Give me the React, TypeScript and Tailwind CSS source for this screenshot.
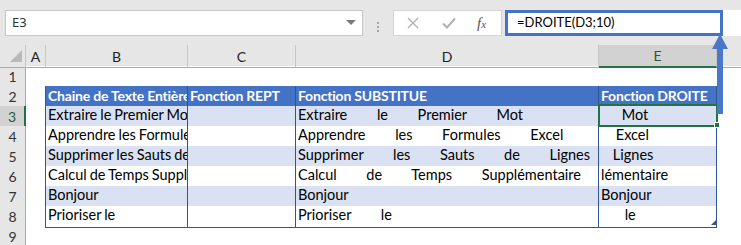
import React from "react";

const words = [
  "Extraire le Premier Mot",
  "Apprendre les Formules Excel",
  "Supprimer les Sauts de Lignes",
  "Calcul de Temps Supplémentaire",
  "Bonjour",
  "Prioriser le",
];

const right10 = (s: string) => s.slice(-10);

const GRID = "grid grid-cols-[26px_20px_142px_108px_303px_118px_1fr]";

function RowHeader({ n, active }: { n: number; active?: boolean }) {
  return (
    <div
      className={
        "flex items-center justify-center border-b border-[#d0d0d0] text-[14px] " +
        (active
          ? "bg-[#d2d2d2] border-r-2 border-r-[#217346] text-[#1e5c3a]"
          : "bg-[#e6e6e6] border-r border-r-[#ababab] text-[#333]")
      }
    >
      {n}
    </div>
  );
}

export default function App() {
  const data = words.map((b) => {
    const d = b.split(" ").join(" ".repeat(10));
    return { b, d, e: right10(d) };
  });

  return (
    <div className="relative w-[741px] h-[245px] overflow-hidden bg-white [font-family:Lato,'Liberation_Sans',sans-serif] text-[14.5px] text-black">
      {/* top formula bar */}
      <div className="flex h-[45px] bg-[#e6e6e6] pt-[10px]">
        <div className="ml-[5px] flex h-[26px] w-[358px] items-center justify-between border border-[#c6c6c6] bg-white pl-[6px] pr-[6px] [font-family:'Noto_Sans',sans-serif] text-[13px] text-[#333]">
          <span>E3</span>
          <svg width="10" height="6" viewBox="0 0 10 6">
            <polygon points="0,0 10,0 5,5" fill="#7a7a7a" />
          </svg>
        </div>
        <div className="flex w-[30px] flex-col items-center justify-center gap-[2px] pb-[2px]">
          <span className="h-[2px] w-[2px] bg-[#a6a6a6]" />
          <span className="h-[2px] w-[2px] bg-[#a6a6a6]" />
          <span className="h-[2px] w-[2px] bg-[#a6a6a6]" />
        </div>
        <div className="flex h-[26px] w-[109px] items-center border border-[#d4d4d4] bg-white">
          <svg className="ml-[13px]" width="12" height="12" viewBox="0 0 12 12">
            <path d="M1 1 L11 11 M11 1 L1 11" stroke="#b0b0b0" strokeWidth="1.3" />
          </svg>
          <svg className="ml-[23px]" width="14" height="12" viewBox="0 0 14 12">
            <path d="M1 6.5 L5 10.5 L13 1.5" stroke="#b0b0b0" strokeWidth="2" fill="none" />
          </svg>
          <span className="ml-[21px] italic text-[#555] [font-family:'Liberation_Serif',serif] text-[15px] leading-none">
            f<span className="text-[11px]">x</span>
          </span>
        </div>
        <div className="ml-[3px] flex h-[26px] w-[218px] items-center border-[3px] border-[#4472c4] bg-white pl-[9px] text-[13px] text-black">
          =DROITE(D3;10)
        </div>
        <div className="h-[26px] flex-1 bg-white" />
      </div>

      {/* column headers */}
      <div className={GRID + " h-[21px] bg-[#e6e6e6] text-[14px] text-[#222]"}>
        <div className="relative border-b border-r border-[#ababab] border-r-[#c6c6c6]">
          <svg className="absolute left-0 top-0" width="25" height="20" viewBox="0 0 25 20">
            <polygon points="10,17 22,5 22,17" fill="#b8b8b8" />
          </svg>
        </div>
        <div className="flex items-center justify-center border-b border-r border-[#ababab] border-r-[#c6c6c6]">A</div>
        <div className="flex items-center justify-center border-b border-r border-[#ababab] border-r-[#c6c6c6]">B</div>
        <div className="flex items-center justify-center border-b border-r border-[#ababab] border-r-[#c6c6c6]">C</div>
        <div className="flex items-center justify-center border-b border-r border-[#ababab] border-r-[#c6c6c6]">D</div>
        <div className="flex items-center justify-center border-b-2 border-r border-b-[#217346] border-r-[#c6c6c6] bg-[#d2d2d2] text-[#1e5c3a]">E</div>
        <div className="border-b border-[#ababab]" />
      </div>

      {/* row 1 */}
      <div className={GRID + " h-[20px]"}>
        <RowHeader n={1} />
        <div />
        <div className="border-b border-[#2f5597]" />
        <div className="border-b border-[#2f5597]" />
        <div className="border-b border-[#2f5597]" />
        <div className="border-b border-[#2f5597]" />
        <div />
      </div>

      {/* row 2 - table header */}
      <div className={GRID + " h-[20px]"}>
        <RowHeader n={2} />
        <div className="border-r border-[#2f5597]" />
        {["Chaine de Texte Entière", "Fonction REPT", "Fonction SUBSTITUE", "Fonction DROITE"].map((t) => (
          <div
            key={t}
            className="flex items-end overflow-hidden whitespace-pre border-b border-r border-[#2f5597] bg-[#4472c4] pb-[1px] pl-[2px] text-[14px] font-bold tracking-[-0.2px] text-white"
          >
            {t}
          </div>
        ))}
        <div />
      </div>

      {/* data rows */}
      {data.map((r, i) => {
        const shade = i % 2 === 0 ? "bg-[#d9e1f2]" : "bg-white";
        const cell =
          "flex items-end overflow-hidden whitespace-pre border-b border-r border-[#2f5597] pb-[1px] pl-[2px] [word-spacing:-0.75px] " +
          shade;
        return (
          <div key={i} className={GRID + " h-[20px]"}>
            <RowHeader n={i + 3} active={i === 0} />
            <div className="border-r border-[#2f5597]" />
            <div className={cell}>{r.b}</div>
            <div className={cell} />
            <div className={cell}>{r.d}</div>
            <div className={cell}>{r.e}</div>
            <div />
          </div>
        );
      })}

      {/* row 9 */}
      <div className={GRID + " h-[20px]"}>
        <RowHeader n={9} />
      </div>

      {/* table resize handle */}
      <svg className="absolute left-[711px] top-[220px]" width="5" height="5" viewBox="0 0 5 5">
        <polygon points="0,5 5,0 5,5" fill="#2f5597" />
      </svg>

      {/* selection E3 */}
      <div className="absolute left-[598px] top-[104px] h-[23px] w-[120px] border-2 border-[#217346]" />
      <div className="absolute left-[714px] top-[122px] h-[6px] w-[6px] border border-white bg-[#217346]" />

      {/* arrow */}
      <svg className="absolute left-[708px] top-[33px]" width="24" height="82" viewBox="0 0 24 82">
        <polygon points="12,1 20,16 4,16" fill="#4a78c8" />
        <rect x="9" y="15" width="6" height="66" fill="#4a78c8" />
      </svg>
    </div>
  );
}
